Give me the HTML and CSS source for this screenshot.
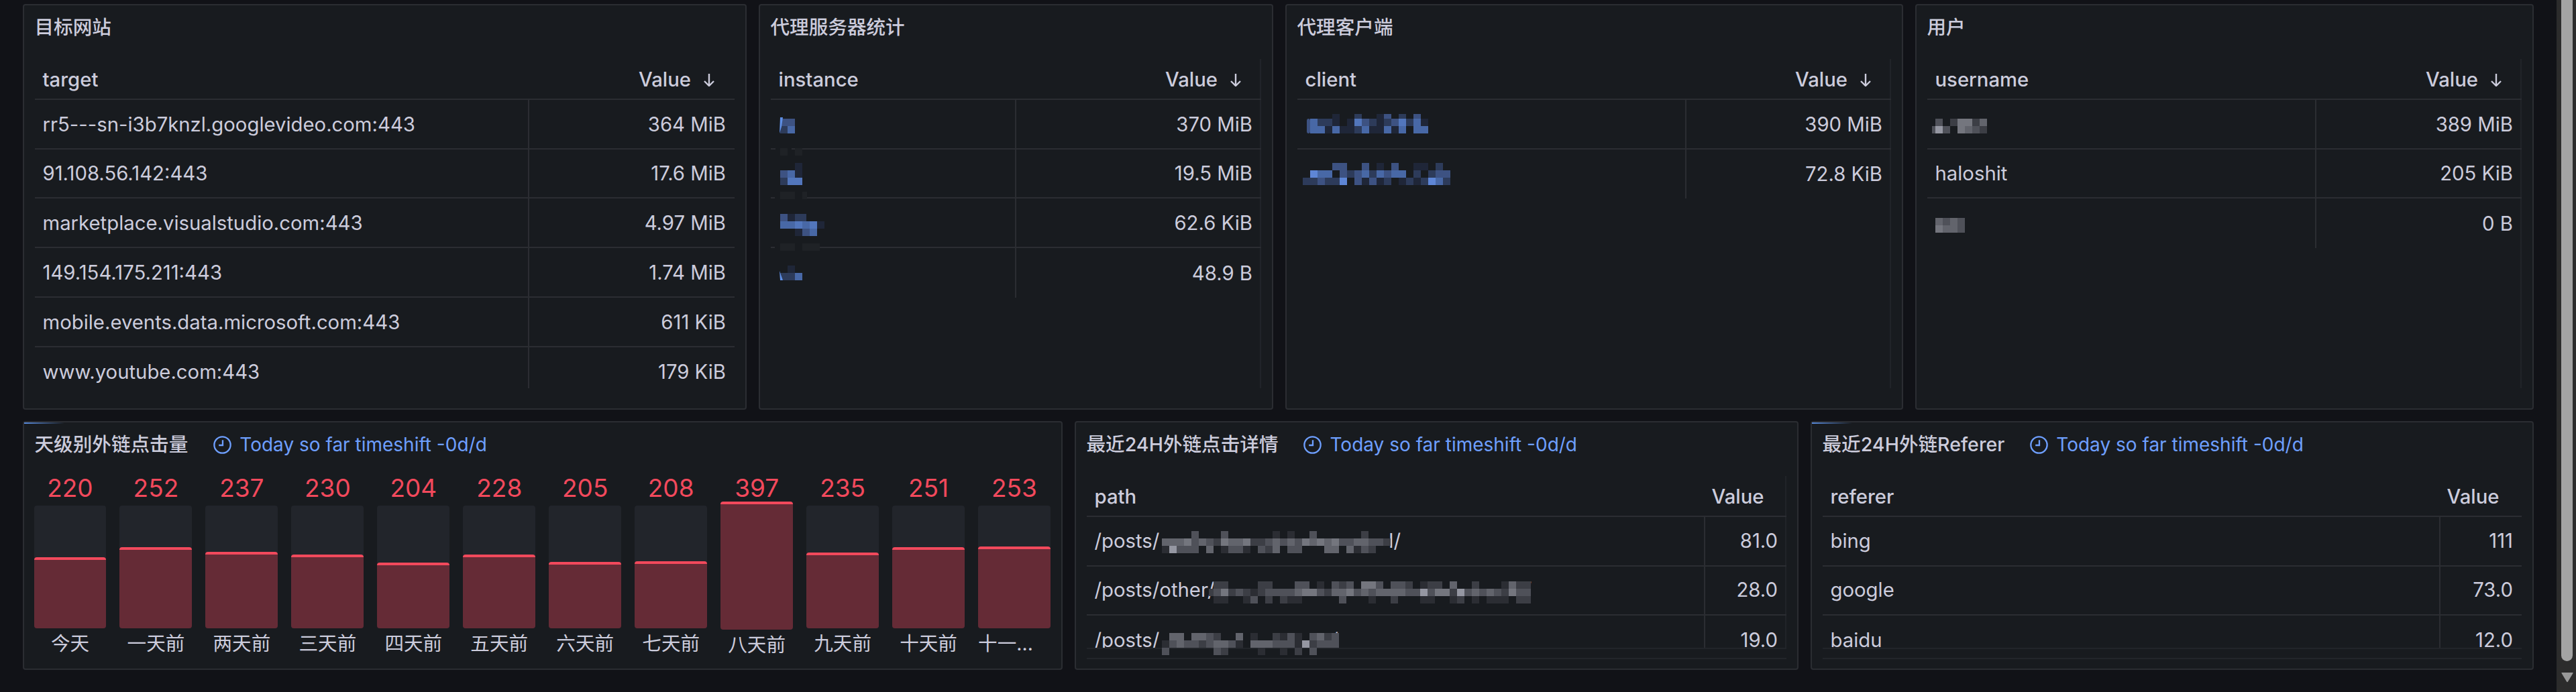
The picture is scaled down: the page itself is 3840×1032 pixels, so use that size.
FILE: index.html
```html
<!DOCTYPE html>
<html lang="zh">
<head>
<meta charset="utf-8">
<title>Dashboard</title>
<link rel="stylesheet" href="styles.css">
</head>
<body>
<div class="page">
  <main class="dash">
    <section class="row row-top">
      <article class="panel">
        <header class="panel-head"><h2 class="panel-title">目标网站</h2></header>
        <div class="tbl-wrap tbl-six">
          <table class="tbl">
            <colgroup><col class="c-735"><col></colgroup>
            <thead><tr><th>target</th><th class="th-val"><span class="sort">Value <svg class="arrow" viewBox="0 0 20 20"><path d="M10 1v18M3 12l7 7 7-7"/></svg></span></th></tr></thead>
            <tbody>
              <tr><td>rr5---sn-i3b7knzl.googlevideo.com:443</td><td>364 MiB</td></tr>
              <tr><td>91.108.56.142:443</td><td>17.6 MiB</td></tr>
              <tr><td>marketplace.visualstudio.com:443</td><td>4.97 MiB</td></tr>
              <tr><td>149.154.175.211:443</td><td>1.74 MiB</td></tr>
              <tr><td>mobile.events.data.microsoft.com:443</td><td>611 KiB</td></tr>
              <tr><td>www.youtube.com:443</td><td>179 KiB</td></tr>
            </tbody>
          </table>
        </div>
      </article>

      <article class="panel">
        <header class="panel-head"><h2 class="panel-title">代理服务器统计</h2></header>
        <div class="tbl-wrap tbl-edge">
          <table class="tbl">
            <colgroup><col class="c-364"><col></colgroup>
            <thead><tr><th>instance</th><th class="th-val"><span class="sort">Value <svg class="arrow" viewBox="0 0 20 20"><path d="M10 1v18M3 12l7 7 7-7"/></svg></span></th></tr></thead>
            <tbody>
              <tr><td>&nbsp;</td><td>370 MiB</td></tr>
              <tr><td>&nbsp;</td><td>19.5 MiB</td></tr>
              <tr><td>&nbsp;</td><td>62.6 KiB</td></tr>
              <tr><td>&nbsp;</td><td>48.9 B</td></tr>
            </tbody>
          </table>
        </div>
      </article>

      <article class="panel">
        <header class="panel-head"><h2 class="panel-title">代理客户端</h2></header>
        <div class="tbl-wrap tbl-edge">
          <table class="tbl">
            <colgroup><col class="c-578"><col></colgroup>
            <thead><tr><th>client</th><th class="th-val"><span class="sort">Value <svg class="arrow" viewBox="0 0 20 20"><path d="M10 1v18M3 12l7 7 7-7"/></svg></span></th></tr></thead>
            <tbody>
              <tr><td>&nbsp;</td><td>390 MiB</td></tr>
              <tr><td>&nbsp;</td><td>72.8 KiB</td></tr>
            </tbody>
          </table>
        </div>
      </article>

      <article class="panel">
        <header class="panel-head"><h2 class="panel-title">用户</h2></header>
        <div class="tbl-wrap tbl-edge">
          <table class="tbl">
            <colgroup><col class="c-578"><col></colgroup>
            <thead><tr><th>username</th><th class="th-val"><span class="sort">Value <svg class="arrow" viewBox="0 0 20 20"><path d="M10 1v18M3 12l7 7 7-7"/></svg></span></th></tr></thead>
            <tbody>
              <tr><td>&nbsp;</td><td>389 MiB</td></tr>
              <tr><td>haloshit</td><td>205 KiB</td></tr>
              <tr><td>&nbsp;</td><td>0 B</td></tr>
            </tbody>
          </table>
        </div>
      </article>
    </section>

    <section class="row row-bottom">
      <article class="panel">
        <span class="loader"></span>
        <header class="panel-head">
          <h2 class="panel-title">天级别外链点击量</h2>
          <svg class="clock" viewBox="0 0 28 28"><circle cx="14" cy="14" r="12.6"/><path d="M14.5 6.5v8h-6"/></svg>
          <span class="shift">Today so far timeshift -0d/d</span>
        </header>
        <div class="bars">
          <div class="bar"><div class="bar-val">220</div><div class="track"><div class="fill" style="height:106px"></div></div><div class="bar-label">今天</div></div>
          <div class="bar"><div class="bar-val">252</div><div class="track"><div class="fill" style="height:121px"></div></div><div class="bar-label">一天前</div></div>
          <div class="bar"><div class="bar-val">237</div><div class="track"><div class="fill" style="height:114px"></div></div><div class="bar-label">两天前</div></div>
          <div class="bar"><div class="bar-val">230</div><div class="track"><div class="fill" style="height:110px"></div></div><div class="bar-label">三天前</div></div>
          <div class="bar"><div class="bar-val">204</div><div class="track"><div class="fill" style="height:98px"></div></div><div class="bar-label">四天前</div></div>
          <div class="bar"><div class="bar-val">228</div><div class="track"><div class="fill" style="height:110px"></div></div><div class="bar-label">五天前</div></div>
          <div class="bar"><div class="bar-val">205</div><div class="track"><div class="fill" style="height:99px"></div></div><div class="bar-label">六天前</div></div>
          <div class="bar"><div class="bar-val">208</div><div class="track"><div class="fill" style="height:100px"></div></div><div class="bar-label">七天前</div></div>
          <div class="bar bar-hot"><div class="bar-val">397</div><div class="track"><div class="fill" style="height:191px"></div></div><div class="bar-label">八天前</div></div>
          <div class="bar"><div class="bar-val">235</div><div class="track"><div class="fill" style="height:113px"></div></div><div class="bar-label">九天前</div></div>
          <div class="bar"><div class="bar-val">251</div><div class="track"><div class="fill" style="height:121px"></div></div><div class="bar-label">十天前</div></div>
          <div class="bar"><div class="bar-val">253</div><div class="track"><div class="fill" style="height:122px"></div></div><div class="bar-label bar-label-cut">十一天前</div></div>
        </div>
      </article>

      <article class="panel">
        <header class="panel-head">
          <h2 class="panel-title">最近24H外链点击详情</h2>
          <svg class="clock" viewBox="0 0 28 28"><circle cx="14" cy="14" r="12.6"/><path d="M14.5 6.5v8h-6"/></svg>
          <span class="shift">Today so far timeshift -0d/d</span>
        </header>
        <div class="tbl-wrap tbl-clip tbl-edge">
          <table class="tbl">
            <colgroup><col class="c-920"><col></colgroup>
            <thead><tr><th>path</th><th class="th-val th-plain">Value</th></tr></thead>
            <tbody>
              <tr><td>/posts/<span class="gap gap-1"></span>l/</td><td>81.0</td></tr>
              <tr><td>/posts/other/<span class="gap gap-2"></span>/</td><td>28.0</td></tr>
              <tr><td>/posts/<span class="gap gap-3"></span>/</td><td>19.0</td></tr>
            </tbody>
          </table>
        </div>
        <div class="tbl-foot"></div>
      </article>

      <article class="panel">
        <span class="loader"></span>
        <header class="panel-head">
          <h2 class="panel-title">最近24H外链Referer</h2>
          <svg class="clock" viewBox="0 0 28 28"><circle cx="14" cy="14" r="12.6"/><path d="M14.5 6.5v8h-6"/></svg>
          <span class="shift">Today so far timeshift -0d/d</span>
        </header>
        <div class="tbl-wrap tbl-clip">
          <table class="tbl">
            <colgroup><col class="c-919"><col></colgroup>
            <thead><tr><th>referer</th><th class="th-val th-plain">Value</th></tr></thead>
            <tbody>
              <tr><td>bing</td><td>111</td></tr>
              <tr><td>google</td><td>73.0</td></tr>
              <tr><td>baidu</td><td>12.0</td></tr>
            </tbody>
          </table>
        </div>
        <div class="tbl-foot"></div>
      </article>
    </section>

    <!-- pixelated redactions laid over the table cells, in page coordinates -->
    <svg class="mosaic" viewBox="0 0 3840 1032" width="3840" height="1032" aria-hidden="true">
      <!-- instance column -->
      <rect class="wipe" x="1156" y="221" width="24" height="2"/>
      <rect class="wipe" x="1155" y="294" width="47" height="2"/>
      <rect class="wipe" x="1155" y="368" width="67" height="2"/>
      <g transform="translate(1163 221) scale(11)"><path class="tg" d="M0 .5h1M2 .5h1"/></g>
      <g transform="translate(1163 286) scale(11)"><path class="tg" d="M0 .5h2M3 .5h.6"/></g>
      <g transform="translate(1163 363) scale(11)"><path class="tg" d="M0 .5h2M3 .5h2.4"/></g>
      <g transform="translate(1163 177) scale(11)">
        <path class="tr" d="M0 .5h2"/><path class="tq" d="M0 1.5h1"/><path class="ts" d="M1 1.5h1"/>
      </g>
      <path class="sliver" d="M1163 175h4l-2 14-3 10z"/>
      <g transform="translate(1163 243) scale(11)">
        <path class="tp" d="M2 .5h1M2 1.5h1"/><path class="tr" d="M0 1.5h1"/><path class="ts" d="M1 1.5h1"/>
        <path class="tq" d="M0 2.5h1"/><path class="tu" d="M1 2.5h2"/>
      </g>
      <g transform="translate(1163 319) scale(11)">
        <path class="tr" d="M0 .5h1M3 2.5h1"/><path class="tp" d="M1 .5h1M5 1.5h1M2 2.5h1"/><path class="tq" d="M2 .5h1.5"/>
        <path class="ts" d="M0 1.5h2M3 1.5h1M4 2.5h1"/><path class="tu" d="M2 1.5h1M4 1.5h1"/>
      </g>
      <g transform="translate(1163 396) scale(11)">
        <path class="tp" d="M1 .5h1"/><path class="tq" d="M0 1.5h2"/><path class="ts" d="M2 1.5h1"/>
      </g>
      <path class="sliver" d="M1162 404l5 14h-4z"/>

      <!-- client column -->
      <g transform="translate(1953 170) scale(11 7)">
        <path class="tp" d="M3 .5h1M9 .5h1"/><path class="tq" d="M6 .5h1M12 .5h1"/><path class="tr" d="M10 .5h1M14 .5h1"/>
      </g>
      <g transform="translate(1953 177) scale(11)">
        <path class="ts" d="M0 .5h1M14 .5h1M0 1.5h2M3 1.5h1M7 1.5h1M10 1.5h1M12 1.5h1M14 1.5h2"/>
        <path class="tq" d="M1 .5h2M8 .5h1M10 .5h1M13 .5h1M6 1.5h1"/>
        <path class="tp" d="M3 .5h1M5 .5h1M9 .5h1M15 .5h1M2 1.5h1M4 1.5h2M8 1.5h2M11 1.5h1"/>
        <path class="tu" d="M6 .5h1M12 .5h1"/><path class="tr" d="M7 .5h1M11 .5h1"/>
      </g>
      <rect class="tone-r" x="1948" y="177" width="5" height="22" rx="3"/>
      <g transform="translate(1953 243) scale(11)">
        <path class="tr" d="M3 .5h2M7 .5h1M11 .5h1M4 1.5h1M6 1.5h1M10 1.5h1M17 1.5h2M1 2.5h1M6 2.5h1M8 2.5h1"/>
        <path class="tp" d="M9 .5h1M14 .5h2M7 2.5h1M9 2.5h1M12 2.5h1M14 2.5h1"/>
        <path class="tq" d="M17 .5h1M5 1.5h1M8 1.5h1M14 1.5h1M16 1.5h1M-1 2.5h2M2 2.5h2M10 2.5h1M13 2.5h1M15 2.5h1M18 2.5h1"/>
        <path class="tv" d="M0 1.5h1M4 2.5h1M16 2.5h1"/>
        <path class="ts" d="M1 1.5h2M7 1.5h1M9 1.5h1M11 1.5h2M17 2.5h1"/>
      </g>

      <!-- username column -->
      <g transform="translate(2885 177) scale(11)">
        <path class="tc" d="M0 .5h1M1 1.5h1M5 1.5h1M-.5 1.5h.5"/><path class="tb" d="M2 .5h1M5 .5h1M6 1.5h1"/>
        <path class="te" d="M3 .5h2M3 1.5h1"/><path class="td" d="M6 .5h1M4 1.5h1"/><path class="tf" d="M0 1.5h1"/>
      </g>
      <g transform="translate(2885 325) scale(11)">
        <path class="td" d="M0 .5h1M2 .5h1M1 1.5h2"/><path class="tc" d="M1 .5h1M3 .5h1M3 1.5h1"/><path class="te" d="M0 1.5h1"/>
      </g>

      <!-- path column -->
      <g transform="translate(1732 792) scale(11)">
        <path class="tc" d="M4 .5h1M8 .5h1M20 .5h1M4 1.5h1M6 1.5h1M14 1.5h1M16 1.5h1M18 1.5h1M24 1.5h2M28 1.5h2M2 2.5h3M9 2.5h2M13 2.5h1M17 2.5h2M27 2.5h1"/>
        <path class="ta" d="M15 .5h1M17 .5h1M0 2.5h1M8 2.5h1M11 2.5h1M26 2.5h1"/>
        <path class="tb" d="M27 .5h1M7 1.5h1M12 1.5h2M30 1.5h1M14 2.5h1M28 2.5h1"/>
        <path class="td" d="M0 1.5h3M5 1.5h1M9 1.5h2M15 1.5h1M17 1.5h1M20 1.5h1M22 1.5h1M26 1.5h2M6 2.5h1M15 2.5h1M22 2.5h2M25 2.5h1"/>
        <path class="te" d="M3 1.5h1M8 1.5h1M11 1.5h1M19 1.5h1M21 1.5h1M23 1.5h1"/>
        <path class="tf" d="M1 2.5h1"/>
      </g>
      <g transform="translate(1732 867) scale(11)">
        <path class="tb" d="M7 .5h2M13 .5h2M24 .5h1M33 .5h1M36 .5h2M42 .5h1M48 .5h2M6.400 1.500h.6M9 1.5h1M11 1.5h1M13 1.5h1M22 1.5h1M39 1.5h1M46 1.5h1M14 2.5h1M16 2.5h1M31 2.5h1M40 2.5h1M48 2.5h2"/>
        <path class="tc" d="M18 .5h2M23 .5h1M25 .5h1M29 .5h1M31 .5h2M7 1.5h1M10 1.5h1M14 1.5h4M21 1.5h1M26 1.5h1M28 1.5h1M33 1.5h2M36 1.5h1M41 1.5h1M43 1.5h1M45 1.5h1M48 1.5h2M12 2.5h1M24 2.5h1"/>
        <path class="ta" d="M21 .5h1M35 .5h1M46 .5h1M12 1.5h1M7 2.5h2M11 2.5h1M17 2.5h2M28 2.5h1M35 2.5h2M39 2.5h1M42 2.5h1M44 2.5h3"/>
        <path class="te" d="M27 .5h2M8 1.5h1M19 1.5h2M25 1.5h1M37 1.5h2M47 1.5h1"/>
        <path class="td" d="M39 .5h1M47 .5h1M18 1.5h1M23 1.5h2M27 1.5h1M29 1.5h4M42 1.5h1M44 1.5h1"/>
        <path class="tf" d="M35 1.5h1M40 1.5h1"/>
      </g>
      <g transform="translate(1732 944) scale(11)">
        <path class="td" d="M1 .5h2M4 .5h2M10 .5h1M21 .5h1M2 1.5h1M7 1.5h2M12 1.5h3"/>
        <path class="tc" d="M6 .5h1M17 .5h1M20 .5h1M23 .5h1M1 1.5h1M3 1.5h2M6 1.5h1M9 1.5h1M15 1.5h3M21 1.5h3M0 2.5h1M7 2.5h1M20 2.5h1"/>
        <path class="tb" d="M7 .5h1M15 .5h1M22 .5h1M5 1.5h1M20 1.5h1M8 2.5h1M18 2.5h1"/>
        <path class="ta" d="M12 .5h1M16 .5h1M18 .5h1M0 1.5h1M10 1.5h1M18 1.5h1M13 2.5h1M16 2.5h1"/>
        <path class="tf" d="M19 1.5h1"/>
      </g>
    </svg>
  </main>

  <aside class="scrollbar">
    <div class="thumb"></div>
    <svg class="scroll-down" viewBox="0 0 20 16"><path d="M2 1h16q1 0 .5 1L11 14.5q-1 1.5-2 0L1.500 2Q1 1 2 1z"/></svg>
  </aside>
</div>
</body>
</html>
```

FILE: styles.css
```css
* { box-sizing: border-box; }

html, body {
  margin: 0;
  height: 100%;
  background: #111217;
}

body {
  overflow: hidden;
  color: #ccccdc;
  font-family: Inter, "Noto Sans CJK SC", sans-serif;
  font-size: 28px;
}

.page {
  display: flex;
  width: 3840px;
  height: 1032px;
}

.dash {
  position: relative;
  flex: 1;
  padding: 6px 0 0 33.5px;
}

.row {
  display: grid;
  column-gap: 17.5px;
}

.row-top {
  grid-template-columns: 1079.5px 767.5px 921.5px 922.5px;
  height: 605px;
  margin-bottom: 17px;
}

.row-bottom {
  grid-template-columns: 1550.5px 1079.5px 1078.5px;
  height: 371px;
}

.panel {
  position: relative;
  display: flex;
  flex-direction: column;
  min-width: 0;
  padding: 0 16px;
  background: #181b1f;
  border: 2px solid #2b2d32;
  border-radius: 4px;
}

.panel-head {
  display: flex;
  align-items: center;
  flex: none;
  height: 66px;
  margin-bottom: 1px;
}

.panel-title {
  margin: 0;
  font-size: 28.6px;
  font-weight: 500;
  line-height: 40px;
  white-space: nowrap;
}

.clock {
  flex: none;
  width: 27px;
  height: 27px;
  margin: 0 12px 0 38px;
  fill: none;
  stroke: #6e9fff;
  stroke-width: 2.4;
}

.shift {
  color: #6e9fff;
  white-space: nowrap;
}

.loader {
  position: absolute;
  top: 0;
  left: 0;
  width: 60px;
  height: 2px;
  background: linear-gradient(90deg, #5a8de0, rgba(90, 141, 224, 0));
}

/* tables */
.tbl-wrap {
  overflow: hidden;
  flex: none;
  height: 504px;
}

.tbl-edge {
  background: linear-gradient(#212429, #212429) right 13px / 2px calc(100% - 13px) no-repeat;
}

.tbl-clip {
  height: 271px;
  border-bottom: 2px solid #22252a;
}

.tbl-foot {
  flex: none;
  height: 15px;
  border-bottom: 2px solid #22252a;
}

.tbl {
  width: 100%;
  table-layout: fixed;
  border-collapse: separate;
  border-spacing: 0;
}

.c-364 { width: 364px; }
.c-578 { width: 578px; }
.c-735 { width: 735px; }
.c-919 { width: 919px; }
.c-920 { width: 920px; }

.tbl th,
.tbl td {
  height: 73.75px;
  padding: 2px 13px 0 12px;
  border-bottom: 2px solid #2b2d32;
  font-size: 29.3px;
  line-height: 40px;
  white-space: nowrap;
}

.tbl-clip .tbl td {
  padding-top: 0;
}

.tbl th {
  padding-top: 16px;
  text-align: left;
  font-weight: 500;
}

.tbl th.th-val {
  padding-right: 28px;
  text-align: right;
}

.tbl th.th-plain {
  padding-right: 34px;
}

.sort {
  display: inline-flex;
  align-items: center;
  gap: 17px;
}

.arrow {
  width: 20px;
  height: 20px;
  fill: none;
  stroke: #ccccdc;
  stroke-width: 2.4;
}

.tbl td + td {
  text-align: right;
  border-left: 2px solid #2b2d32;
}

.tbl tbody tr:last-child td {
  border-bottom: 0;
}

.gap {
  display: inline-block;
}

.gap-1 { width: 342px; }
.gap-2 { width: 462px; }
.gap-3 { width: 256px; }

/* bar gauge */
.bars {
  display: grid;
  grid-template-columns: repeat(12, minmax(0, 1fr));
  column-gap: 20px;
  margin-left: -1px;
}

.bar {
  display: flex;
  flex-direction: column;
  min-width: 0;
}

.bar-val {
  height: 44px;
  margin: 9px 0 4px;
  color: #f2495c;
  font-size: 37px;
  line-height: 44px;
  text-align: center;
}

.track {
  display: flex;
  align-items: flex-end;
  height: 183px;
  background: #22252b;
  border-radius: 4px;
}

.fill {
  width: 100%;
  background: #652b36;
  border-top: 4px solid #f2495c;
  border-radius: 4px;
}

.bar-hot .fill {
  margin-bottom: -2px;
}

.bar-label {
  overflow: hidden;
  height: 36px;
  margin-top: 5px;
  font-size: 28.6px;
  line-height: 36px;
  text-align: center;
  text-overflow: ellipsis;
  white-space: nowrap;
}

.bar-hot .bar-label {
  padding-top: 2px;
}

.bar-label-cut {
  text-align: left;
}

/* scrollbar */
.scrollbar {
  position: relative;
  flex: none;
  width: 29px;
  background: #2c2c2c;
}

.thumb {
  width: 17px;
  height: 986px;
  margin-left: 7px;
  background: #a3a3a3;
  border-radius: 0 0 9px 9px;
}

.scroll-down {
  display: block;
  width: 20px;
  height: 16px;
  margin: 16px 0 0 6px;
  fill: #999999;
}

/* pixelated redactions */
.mosaic {
  position: absolute;
  top: 0;
  left: 0;
  pointer-events: none;
}

.mosaic g path {
  fill: none;
  stroke-width: 1;
  shape-rendering: crispEdges;
}

.wipe { fill: #181b1f; }
.sliver { fill: #5e8fe6; }
.tone-r { fill: #3d5282; }

.tg { stroke: #1f2226; }

.ta { stroke: #2b2d33; }
.tb { stroke: #3c3e45; }
.tc { stroke: #4f5159; }
.td { stroke: #62646c; }
.te { stroke: #74767e; }
.tf { stroke: #9597a2; }

.tp { stroke: #1f2638; }
.tq { stroke: #2d3b5a; }
.tr { stroke: #3d5282; }
.ts { stroke: #4868a6; }
.tu { stroke: #5276bc; }
.tv { stroke: #5e86d6; }
```
